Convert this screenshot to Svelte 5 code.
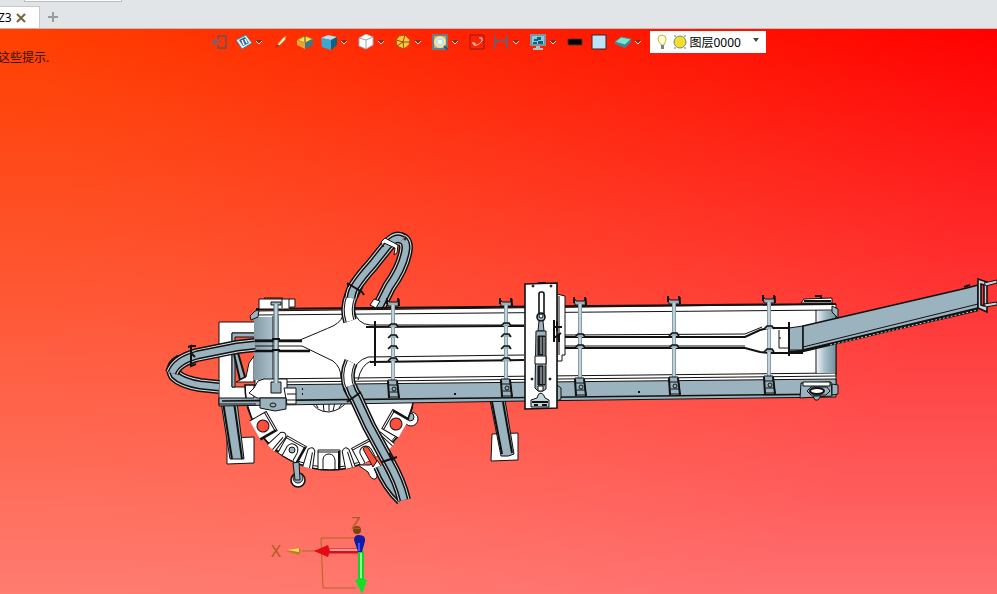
<script>
	let layer = '图层0000'

	const tools = [
		{ id: 'exit', label: 'Exit' },
		{ id: 'view', label: 'View', menu: true },
		{ id: 'brush', label: 'Brush' },
		{ id: 'face', label: 'Face' },
		{ id: 'shaded', label: 'Shaded', menu: true },
		{ id: 'wire', label: 'Wireframe', menu: true },
		{ id: 'pie', label: 'Section', menu: true },
		{ id: 'zoom', label: 'Zoom', menu: true },
		{ id: 'orbit', label: 'Rotate' },
		{ id: 'measure', label: 'Measure', menu: true },
		{ id: 'screen', label: 'Display', menu: true },
		{ id: 'line', label: 'Line' },
		{ id: 'fill', label: 'Fill' },
		{ id: 'layers', label: 'Layers', menu: true },
	]

	// guide tracks, every one is stroked in several layers
	const tracksBack = [
		'M378 309 L389 287 Q404 266 406 248 Q406 239 399 239',
		'M219 387 L200 385 Q182 382 175 375 Q170 367 181 361',
		'M380 466 Q388 486 402 499',
	]
	const tracksFront = [
		'M351 298 Q352 290 356 285 Q362 276 372 265 L388 245 Q396 236 402 240',
		'M255 345 L237 347 L197 355 Q176 361 172 373',
		'M350 386 Q352 393 356 398 L369 426 L388 461 Q400 482 404 500',
	]
	const necks = [
		'M350 321 Q346 309 351 296 L357 284',
		'M351 362 Q345 375 350 388 L357 400',
	]

	// cross bars over the conveyor: x, top, bottom, guide heights
	const bars = [
		{ x: 393, top: 302, bottom: 388, at: [326, 337, 348, 360] },
		{ x: 506, top: 302, bottom: 387, at: [325, 336, 348, 360] },
		{ x: 580, top: 301, bottom: 386, at: [336, 347] },
		{ x: 674, top: 300, bottom: 385, at: [335, 347] },
		{ x: 769, top: 299, bottom: 384, at: [328, 351] },
	]

	const pads = [
		{ x: 263, y: 426, r: 60, hole: true },
		{ x: 292, y: 450, r: 29 },
		{ x: 329, y: 460, r: 0 },
		{ x: 366, y: 452, r: -28 },
		{ x: 396, y: 424, r: -60, hole: true },
	]

	const ribs = [
		{ x: 278, y: 441, r: 44 },
		{ x: 310, y: 458, r: 14 },
		{ x: 348, y: 458, r: -14 },
		{ x: 384, y: 440, r: -44 },
	]
</script>

<main>
	<header>
		<div class="ribbon"></div>
		<div class="tabs">
			<div class="tab"><span>Z3</span>
				<button aria-label="Close tab"><svg width="10" height="10" viewBox="0 0 10 10"><path d="M1 1 L9 9 M9 1 L1 9" stroke="#75643c" stroke-width="2" /></svg></button>
			</div>
			<button class="add" aria-label="New tab"><svg width="10" height="10" viewBox="0 0 10 10"><path d="M5 0 V10 M0 5 H10" stroke="#999da0" stroke-width="2" /></svg></button>
		</div>
	</header>

	<section class="viewport">
		<svg class="model" viewBox="0 29 997 565" preserveAspectRatio="xMidYMid slice" role="img" aria-label="Model">
			<defs>
				<linearGradient id="drumLeft"><stop offset="0" stop-color="#849ba6" /><stop offset="1" stop-color="#abc2cc" /></linearGradient>
				<linearGradient id="drumRight"><stop offset="0" stop-color="#eaf1f4" /><stop offset=".4" stop-color="#a8c0cb" /><stop offset="1" stop-color="#738e9b" /></linearGradient>
			</defs>

			<!-- left frame, legs -->
			<g class="ink">
				<path class="white" d="M227 438 L254 437 V463 L227 464 Z" />
				<path class="steel" d="M221 402 H237 L244 459 H230 Z" />
				<path d="M223 402 L232 459 M234 402 L242 459" stroke-width="2" />
				<path class="white" fill-rule="evenodd" d="M219 322 H257 V405 H219 Z M232 333 H257 V387 H232 Z" />
				<path class="steel" d="M232 333 H257 V337 H235 V387 H232 Z" />
				<path class="steel" d="M234 354 L238 353 L245 377 L240 380 Z" stroke-width="2" />
				<path class="white" d="M246 377 L249 363 L254 356 V382 H236 Z" />
				<path class="white" d="M492 434 L518 433 V460 L491 461 Z" />
				<path class="steel" d="M490 400 H505 L514 454 Q509 457 501 456 Z" />
				<path d="M492 402 L502 454 M503 402 L512 453" stroke-width="2" />
			</g>

			<!-- turntable -->
			<g class="ink">
				<circle class="white" cx="411" cy="419" r="7" /><circle class="steel" cx="410" cy="417" r="4" />
				<path class="white" d="M245 392 A85 85 0 0 0 415 392 Z" stroke-width="1.6" transform="translate(0 -7)" />
				<path d="M247 407 Q265 462 330 468 Q390 464 413 407" />
				{#each ribs as rib}
					<path class="white" transform="translate({rib.x} {rib.y}) rotate({rib.r})" d="M-5 10 L-4 -8 Q0 -13 3 -8 L5 10 M1 -6 L2 10" />
				{/each}
				{#each pads as pad}
					<g transform="translate({pad.x} {pad.y}) rotate({pad.r})">
						<path class="white" d="M-11 9 V-10 H11 V9 M-11 -8 H11" />
						<path d="M10 -9 V9" stroke-width="2" />
						{#if pad.hole}
							<circle class="red" r="6" />
						{:else}
							<path class="white" d="M-6 9 V-1 Q-5 -6 0 -6 Q5 -6 6 0 V9" />
						{/if}
					</g>
				{/each}
				<path class="white" d="M310 400 Q316 412 329 412 Q342 410 348 400" />
				<path d="M315 402 L318 408 M323 402 L324 411 M329 402 V411 M335 402 L333 411 M343 402 L339 408" />
				<circle class="steel" cx="292" cy="450" r="3" />
				<ellipse class="white" cx="298" cy="480" rx="7" ry="7" stroke-width="1.6" /><ellipse class="steel" cx="298" cy="478" rx="5" ry="5" />
				<path class="steel" d="M293 463 L299 462 L300 480 H295 Z" />
				<path class="white" d="M358 465 L370 465 L377 460 L381 466 L375 470 Q379 478 375 479 Q371 480 368 472 Z" />
				<path class="red" d="M363 449 Q366 444 369 449 L377 461 L373 467 Z" />
			</g>

			{#each tracksBack as d}
				<path class="track t1" {d} /><path class="track t2" {d} /><path class="track t3" {d} /><path class="track t4" {d} />
			{/each}

			<!-- conveyor body -->
			<g class="ink">
				<path class="white" d="M255 311 L836 304 V375 L836 390 L255 401 Z" />
				<path class="steel" d="M254 385 L836 379 V397 L525 401 L219 406 V398 H254 Z" />
				<path d="M222 401 L836 394" stroke-width="1.6" />
				<path d="M256 309 L836 304" stroke-width="2" />
				<path d="M256 315 L836 310 M256 379 L836 373 M285 382 L836 376 M219 404 H256" />
				<rect x="254" y="317" width="19" height="63" fill="url(#drumLeft)" stroke="none" />
				<rect x="817" y="311" width="19" height="62" fill="url(#drumRight)" stroke="none" />
				<path d="M273 316 V379 M278 316 V379 M816 310 V373 M836 308 V375" />
				<path class="steel" d="M250 316 L255 311 L259 310 L258 317 L251 320 Z" />
				<path class="steel" d="M832 306 L838 309 V318 L832 312 Z" />
				<path class="white" d="M259 299 H295 V307 H290 L289 309 H259 Z" />
				<path d="M282 299 V308 M289 299 V308 M264 298 H283" />
				<path class="steel" d="M271 302 H281 V305 H271 Z" />
				<path class="white" d="M258 381 L264 379 H287 V398 H257 L249 393 L254 388 Z" />
				<path class="white" d="M284 388 H296 V404 H287 Z" />
				<path class="steel" d="M260 398 H286 V409 L275 411 L260 408 Z M287 394 H296 M287 400 H296" />
				<path class="steel" d="M271 382 H281 V393 H271 Z" />
				<ellipse cx="273" cy="405" rx="3" ry="2" />
				<path d="M302 389 h1 M302 394 h1 M454 394 h2 M638 392 h2" stroke-width="2" />
				<path class="white" d="M801 303 L804 299 L832 298 V303 Z" /><path class="steel" d="M800 398 L801 383 L831 382 L832 396 Z" />
				<path class="white" d="M803 382 H830 V386 H803 Z" />
				<path d="M804 301 H831 M815 296 H821 V299" stroke-width="2" />
				<path class="steel" d="M832 384 L838 385 V394 L832 395 Z M811 387 H827 L830 391 L826 395 H811 L807 391 Z" />
				<ellipse class="white" cx="817" cy="391" rx="7" ry="3" stroke-width="2" /><path class="steel" d="M813 396 H821 L818 400 H815 Z" />
			</g>

			<!-- guides on the belt -->
			<g class="ink">
				<path d="M255 340 H300 Q324 330 333 326 Q343 321 344 311 M255 346 H302 L333 361 Q341 367 341 378" />
				<path d="M255 341 H302 M255 351 H310" stroke-width="2.4" />
				<path d="M366 327 L524 326 M370 362 L524 360" stroke-width="2" />
				<path d="M354 310 Q357 324 370 325 H524 M353 374 Q355 361 368 357 L524 355 M358 380 Q361 365 371 361" />
				<path d="M375 321 V366" stroke-width="2" />
				<path d="M565 337 H745 L760 330 L769 328 H790 M565 348 H745 L760 352 L769 353 H803" stroke-width="2" />
				<path d="M565 335 L745 334 L762 327 M565 346 H745" />
				<path d="M779 330 V348 H803 M779 338 h2" />
			</g>

			{#each necks as d}
				<path class="track t1" {d} /><path class="track t2" {d} /><path class="track t3" {d} /><path class="track neck" {d} />
			{/each}
			{#each tracksFront as d}
				<path class="track t1" {d} /><path class="track t2" {d} /><path class="track t3" {d} /><path class="track t4" {d} />
			{/each}
			<g class="ink">
				<path class="white" d="M381 242 L385 238 L398 245 L397 253 L394 255 L395 248 L384 243 L383 247 Z" />
				<path d="M347 283 L352 286 L362 292 L364 295 M348 287 V284 M188 347 L191 346 V366 L196 364 M190 346 H196 M191 353 L195 357 M347 402 L361 392 M382 462 L397 457 M389 453 L393 461" stroke-width="2" />
				<path class="white" d="M370 305 L374 299 L380 301 L376 308 Z" />
				<circle cx="405" cy="239" r="1" class="red" />
			</g>

			<!-- chute -->
			<g class="ink">
				<path class="steel" d="M789 328 L803 326 V350 L789 350 Z" />
				<path class="steel" d="M803 326 L967 288 L978 285 V308 L803 350 Z" stroke-width="1.6" />
				<path d="M803 347 L978 304" />
				<path d="M789 352 L803 351 L900 328 L978 310" stroke-width="2.4" />
				<path d="M830 345 L978 310" stroke="#b9ccd4" stroke-dasharray="2 2" />
				<path d="M789 322 V356 M964 287 L970 285" stroke-width="2" />
				<path class="pale" fill-rule="evenodd" d="M978 279 L987 282 V312 L978 308 Z M981 284 L984 285 V306 L981 305 Z" stroke-width="1.6" />
				<path class="pale" d="M984 283 L997 280 V283 L986 286 Z M984 304 L997 302 V305 L986 307 Z" />
			</g>

			<!-- cross bars -->
			<g class="ink">
				<path d="M276 304 V383" stroke="#526873" stroke-width="5" /><path d="M276 304 V383" stroke="#c1d3da" stroke-width="3" />
				<path d="M272 339 H280 M272 350 H280" stroke-width="2" />
				{#each bars as bar}
					<path class="steel" d="M{bar.x - 6} {bar.top - 3} L{bar.x - 4} {bar.top} H{bar.x + 4} L{bar.x + 6} {bar.top - 3} V{bar.top + 4} H{bar.x - 5} Z" />
					<path d="M{bar.x - 6} {bar.top - 4} V{bar.top + 2} M{bar.x + 5} {bar.top - 4} L{bar.x + 6} {bar.top + 4}" stroke-width="2" />
					<path d="M{bar.x} {bar.top + 3} V{bar.bottom - 6}" stroke="#526873" stroke-width="4" />
					<path d="M{bar.x} {bar.top + 3} V{bar.bottom - 6}" stroke="#c1d3da" stroke-width="3" />
					{#each bar.at as y}
						<path class="steel" d="M{bar.x - 5} {y + 1} L{bar.x - 2} {y - 2} H{bar.x + 3} L{bar.x + 5} {y + 1}" stroke-width="1.6" />
					{/each}
					<path class="steel" d="M{bar.x - 5} {bar.bottom - 8} H{bar.x + 4} L{bar.x + 6} {bar.bottom + 9} H{bar.x - 4} Z" />
					<path d="M{bar.x - 5} {bar.bottom - 7} L{bar.x - 4} {bar.bottom + 10} M{bar.x + 4} {bar.bottom - 7} L{bar.x + 6} {bar.bottom + 10}" stroke-width="2" />
					<circle cx={bar.x + 1} cy={bar.bottom + 1} r="2" /><path d="M{bar.x - 4} {bar.bottom - 3} h9 M{bar.x - 3} {bar.bottom + 4} h8" />
				{/each}
			</g>

			<!-- inspection station -->
			<g class="ink">
				<path class="white" d="M557 294 L565 296 V355 H562 V361 H557 Z" />
				<path class="steel" d="M557 385 L561 388 V399 L557 401 Z" />
				<path class="white" d="M525 284 L557 283 V408 L525 409 Z" stroke-width="1.6" />
				<path d="M538 283 H546 M554 320 V342 M557 321 V331 M554 327 H562 M554 338 L561 333 M559 335 V342" stroke-width="2" /><path d="M559 296 V355" />
				<rect class="white" x="539" y="292" width="5" height="23" rx="2" stroke-width="1.6" />
				<circle class="steel" cx="541" cy="317" r="4" stroke-width="1.6" /><circle class="white" cx="541" cy="316" r="2" />
				<path class="steel" d="M539 321 H543 L544 331 H538 Z" />
				<path class="steel" d="M536 331 H546 V389 L543 391 H538 L535 388 Z" />
				<path d="M538 336 H545 V355 H538 Z M538 366 H545 V385 H538 Z" fill="#222" /><path d="M541 337 V354 M541 367 V384 M544 337 V384" stroke="#c1d3da" />
				<path class="white" d="M535 356 H546 V364 H535 Z M538 386 H543 V391 H538 Z" />
				<path class="pale" d="M537 398 Q538 393 541 393 Q544 394 545 398 L549 400 V407 H531 V400 Z" /><path d="M532 402 H548 M534 405 H538 M542 405 H547" stroke-width="2" />
				<g fill="#333"><circle cx="533" cy="286" r="1" /><circle cx="551" cy="286" r="1" /><circle cx="532" cy="379" r="1" /><circle cx="550" cy="379" r="1" /></g>
			</g>

			<!-- axis triad -->
			<g fill="none">
				<path d="M358 538 H321 L323 588 H356 M302 551 H318" stroke="#ad6a20" />
				<path d="M286 551 L299 547 L301 551 L299 555 Z" fill="#b9801c" /><path d="M287 550 L299 548 V552 Z" fill="#ffd864" />
				<path d="M329 551 H360" stroke="#d8101c" stroke-width="5" /><path d="M329 550 H360" stroke="#ff9a9a" stroke-width="2" />
				<path d="M314 551 L328 545 L330 551 L328 557 Z" fill="#e30b15" />
				<path d="M361 551 V582" stroke="#16cf2b" stroke-width="6" /><path d="M361 553 V582" stroke="#8fff96" stroke-width="2" />
				<path d="M355 580 L361 578 L367 580 L362 594 Z" fill="#13df2a" />
				<ellipse cx="357" cy="530" rx="4" ry="4" fill="#79430d" />
				<path d="M354 540 Q354 535 359 535 Q366 535 365 541 L362 552 H358 Z" fill="#101ca5" /><path d="M359 543 V551" stroke="#3d57f0" stroke-width="2" />
				<text x="271" y="557">X</text><text x="351" y="529">Z</text>
			</g>
		</svg>

		<div class="toolbar">
			{#each tools as tool}
				<button class:menu={tool.menu} aria-label={tool.label}>
					<svg width="16" height="16" viewBox="0 0 16 16" fill="none">
						{#if tool.id === 'exit'}
							<path d="M6 5 V2 H14 V14 H6 V11" stroke="#66525a" stroke-width="1.5" /><path d="M1 8 H9 M4 5 L1 8 L4 11" stroke="#536d89" stroke-width="1.5" />
						{:else if tool.id === 'view'}
							<path d="M0 6 L10 1 L16 9 L6 15 Z" fill="#deeff2" stroke="#55798a" /><path d="M3 6 L9 3 L13 9 L7 12 Z" fill="#2868a2" /><path d="M6 6 L8 11 M9 5 L11 9" stroke="#fff" stroke-width="1.5" />
						{:else if tool.id === 'brush'}
							<path d="M4 11 L10 4 L13 2 L12 6 L6 12 Z" fill="#ffeecb" stroke="#cb8b45" /><path d="M2 14 L4 10 L7 12 Z" fill="#c12913" />
						{:else if tool.id === 'face'}
							<path d="M0 6 L8 2 L16 5 L8 9 Z" fill="#ffe047" stroke="#9a861d" /><path d="M0 6 L8 9 V15 L0 11 Z" fill="#e5a437" /><path d="M8 9 L16 5 V11 L8 15 Z" fill="#42758a" /><path d="M8 2 V8" stroke="#444" />
						{:else if tool.id === 'shaded'}
							<path d="M0 4 L7 1 L16 3 L10 6 Z" fill="#b1e4f2" /><path d="M0 4 L10 6 V16 L1 13 Z" fill="#3ba8d2" /><path d="M10 6 L16 3 V11 L10 16 Z" fill="#15607e" />
						{:else if tool.id === 'wire'}
							<path d="M1 4 L8 0 L15 3 V11 L8 15 L1 12 Z" fill="#fff" stroke="#a5aab2" /><path d="M1 4 L8 6 L15 3 M8 6 V15" stroke="#9ca4b1" />
						{:else if tool.id === 'pie'}
							<path d="M4 2 L10 1 L15 6 L14 11 L9 15 L2 12 L1 6 Z" fill="#ffc936" stroke="#a65918" /><path d="M8 8 L10 1 M8 8 L15 8 M8 8 L9 15 M8 8 L2 12 M8 8 L1 6" stroke="#8c4c18" />
						{:else if tool.id === 'zoom'}
							<path d="M1 1 H15 V15 H1 Z" fill="#b7a58b" stroke="#6f7b80" stroke-width="2" /><circle cx="8" cy="8" r="5" fill="#b6e4eb" stroke="#f8e58d" stroke-width="2" /><path d="M6 6 H10 V10 H6 Z" fill="#e8fcff" /><path d="M12 12 L16 16" stroke="#2e5580" stroke-width="2" />
						{:else if tool.id === 'orbit'}
							<path d="M1 1 H15 V15 H1 Z" stroke="#8f1c1a" /><path d="M4 10 Q6 13 10 10 L13 7" stroke="#ffc2a1" /><path d="M3 9 H6 V12 M10 4 H13 V7" stroke="#d9dede" />
						{:else if tool.id === 'measure'}
							<path d="M2 1 V15 M14 1 V15" stroke="#7b5665" stroke-width="2" /><path d="M3 7 H13 M6 5 L3 7 L6 9 M10 5 L13 7 L10 9" stroke="#576981" />
						{:else if tool.id === 'screen'}
							<path d="M0 0 H16 V12 H0 Z" fill="#7f959d" /><path d="M2 2 H14 V10 H2 Z" fill="#8bcbe2" /><path d="M4 5 h4 v2 h-4 z M7 3 h4 v3 h-4 z M3 8 h4 v2 h-4 z M8 7 h5 v3 h-5 z" fill="#12627f" /><path d="M6 12 H10 V14 H13 V16 H3 V14 H6 Z" fill="#b2c0c5" />
						{:else if tool.id === 'line'}
							<path d="M1 5 H15 V11 H1 Z" fill="#000" stroke="#59352c" />
						{:else if tool.id === 'fill'}
							<path d="M1 1 H15 V15 H1 Z" fill="#bee2f6" stroke="#362729" />
						{:else}
							<path d="M0 8 L6 3 L16 5 L10 11 Z" fill="#7ae1d4" stroke="#57898d" /><path d="M0 8 L10 11 L16 5 V8 L10 14 L0 10 Z" fill="#358c9b" />
						{/if}
					</svg>
					{#if tool.menu}<svg width="8" height="6" viewBox="0 0 8 6"><path d="M1 1 H7 L4 5 Z" fill="#7b3329" /><path d="M1 2 L4 5 L7 2" fill="none" stroke="#ffd4c8" /></svg>{/if}
				</button>
			{/each}
			<label class="layer">
				<svg width="34" height="18" viewBox="0 0 34 18">
					<path d="M5 12 Q2 8 2 6 Q2 2 6 2 Q10 2 10 6 Q10 8 8 12 Z" fill="#fffbd0" stroke="#c9b847" /><path d="M5 13 H8 M5 15 H8" stroke="#77848f" stroke-width="2" />
					<circle cx="24" cy="9" r="6" fill="#f3df29" stroke="#77848f" /><path d="M18 3 h2 M28 3 h2 M18 15 h2 M28 15 h2" stroke="#77848f" />
				</svg>
				<select bind:value={layer} aria-label="Layer">
					<option>图层0000</option>
				</select>
				<svg class="caret" width="6" height="4" viewBox="0 0 6 4"><path d="M0 0 H6 L3 4 Z" fill="#444" /></svg>
			</label>
		</div>
		<p>这些提示.</p>
	</section>
</main>

<style>
	:global(body) {
		margin: 0;
	}
	main {
		min-height: 100vh;
		display: flex;
		flex-direction: column;
		font-family: "Noto Sans", "Noto Sans CJK SC", sans-serif;
		font-size: 12px;
		overflow: hidden;
	}
	button {
		border: 0;
		padding: 0;
		background: none;
		display: flex;
		align-items: center;
	}
	header {
		background: #e1e5e8;
		border-bottom: 1px solid #c5b9b7;
	}
	.ribbon {
		width: 96px;
		height: 1px;
		margin-left: 24px;
		background: #fff;
		border: 1px solid #b8bdc1;
		border-top: 0;
		box-sizing: content-box;
	}
	.tabs {
		display: flex;
		padding-top: 4px;
	}
	.tab {
		display: flex;
		align-items: center;
		gap: 4px;
		width: 40px;
		height: 22px;
		background: #fff;
		border: 1px solid #c5c9cc;
		border-width: 1px 1px 0 0;
		box-sizing: border-box;
	}
	.tab span {
		margin-left: -2px;
	}
	.add {
		margin-left: 8px;
	}
	.viewport {
		flex: 1;
		position: relative;
		background: radial-gradient(100% 150% at 0 0, #004000, #000000), linear-gradient(#ff0000, #ff7070);
		background-blend-mode: screen;
	}
	.model {
		position: absolute;
		width: 100%;
		height: 100%;
	}
	.model text {
		font-size: 17px;
		fill: #ad5c1e;
	}
	.ink {
		fill: none;
		stroke: #111;
		stroke-width: 1;
	}
	.white {
		fill: #fff;
	}
	.steel {
		fill: #9bb3be;
	}
	.pale {
		fill: #c5d5dc;
	}
	.red {
		fill: #ff4f3b;
	}
	.track {
		fill: none;
	}
	.t1 {
		stroke: #111;
		stroke-width: 14;
	}
	.t2 {
		stroke: #dbe4e8;
		stroke-width: 11;
	}
	.t3 {
		stroke: #111;
		stroke-width: 9;
	}
	.t4 {
		stroke: #9bb3be;
		stroke-width: 6;
	}
	.neck {
		stroke: #fff;
		stroke-width: 7;
	}
	.toolbar {
		position: relative;
		display: flex;
		justify-content: center;
		align-items: center;
		height: 26px;
		padding-right: 24px;
	}
	.toolbar button {
		flex: none;
		width: 24px;
		padding-left: 4px;
		gap: 3px;
	}
	.toolbar .menu {
		width: 37px;
	}
	.layer {
		display: flex;
		align-items: center;
		width: 116px;
		height: 22px;
		margin-left: 2px;
		padding: 0 7px 0 6px;
		background: #fff;
		box-sizing: border-box;
	}
	.layer svg {
		flex: none;
	}
	select {
		flex: 1;
		min-width: 0;
		padding: 0;
		border: 0;
		appearance: none;
		background: none;
		color: #000;
		font: inherit;
	}
	.caret {
		margin-bottom: 4px;
	}
	p {
		position: relative;
		margin: -5px 0 0 -2px;
		color: #301005;
		line-height: 16px;
		pointer-events: none;
	}
</style>
